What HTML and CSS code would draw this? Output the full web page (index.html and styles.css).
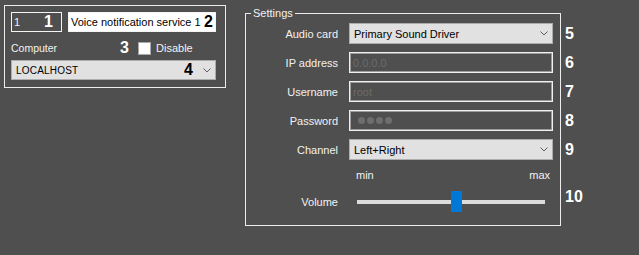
FILE: index.html
```html
<!DOCTYPE html>
<html lang="en">
<head>
  <meta charset="UTF-8" />
  <meta name="viewport" content="width=device-width, initial-scale=1.0" />
  <title>Voice notification service</title>
  <link rel="stylesheet" href="styles.css">
</head>
<body>
  <div class="screen">
    <div class="object-panel">
      <div class="name-row">
        <div class="field field-id"><span>1</span><b class="num">1</b></div>
        <div class="field field-name"><span>Voice notification service 1</span><b class="num dark">2</b></div>
      </div>
      <div class="computer-row">
        <span>Computer</span>
        <b class="num">3</b>
        <label class="check"><span class="box"></span>Disable</label>
      </div>
      <div class="combo combo-host">
        <span class="combo-text">LOCALHOST</span>
        <b class="num dark">4</b>
        <svg class="chevron" width="8" height="5" viewBox="0 0 8 5"><path d="M0.5 0.5 L4 4 L7.5 0.5" fill="none" stroke="#606060" stroke-width="1"/></svg>
      </div>
    </div>

    <fieldset class="settings">
      <legend>Settings</legend>
      <div class="grid">
        <div class="label">Audio card</div>
        <div class="control">
          <div class="combo">
            <span class="combo-text">Primary Sound Driver</span>
            <svg class="chevron" width="8" height="5" viewBox="0 0 8 5"><path d="M0.5 0.5 L4 4 L7.5 0.5" fill="none" stroke="#606060" stroke-width="1"/></svg>
          </div>
          <b class="num side">5</b>
        </div>

        <div class="label">IP address</div>
        <div class="control">
          <div class="input"><span class="hint">0.0.0.0</span></div>
          <b class="num side">6</b>
        </div>

        <div class="label">Username</div>
        <div class="control">
          <div class="input"><span class="hint">root</span></div>
          <b class="num side">7</b>
        </div>

        <div class="label">Password</div>
        <div class="control">
          <div class="input"><span class="dots"><i></i><i></i><i></i><i></i></span></div>
          <b class="num side">8</b>
        </div>

        <div class="label">Channel</div>
        <div class="control">
          <div class="combo">
            <span class="combo-text">Left+Right</span>
            <svg class="chevron" width="8" height="5" viewBox="0 0 8 5"><path d="M0.5 0.5 L4 4 L7.5 0.5" fill="none" stroke="#606060" stroke-width="1"/></svg>
          </div>
          <b class="num side">9</b>
        </div>

        <div></div>
        <div class="range-labels"><span>min</span><span>max</span></div>

        <div class="label volume-label">Volume</div>
        <div class="control volume">
          <div class="slider">
            <div class="track"></div>
            <div class="thumb" style="left: 50%"></div>
          </div>
          <b class="num side">10</b>
        </div>
      </div>
    </fieldset>
  </div>
</body>
</html>
```

FILE: styles.css
```css
body {
  margin: 0;
  background: #4f4f4f;
  font-family: "Liberation Sans", Arial, sans-serif;
  font-size: 11px;
  color: #f2f2f2;
}
.screen {
  display: flex;
  align-items: flex-start;
  padding: 5px 0 0 4px;
  height: 250px;
}
.object-panel {
  width: 222px;
  height: 83px;
  box-sizing: border-box;
  border: 1px solid #ececec;
  padding: 6px 9px 0 6px;
}
.name-row {
  display: flex;
  gap: 6px;
}
.field {
  height: 20px;
  box-sizing: border-box;
  border: 1px solid #f4f4f4;
  display: flex;
  align-items: center;
  justify-content: space-between;
  padding: 0 3px 0 2px;
  white-space: nowrap;
}
.field-id {
  width: 51px;
  padding-right: 8px;
}
.field-name {
  flex: 1;
  background: #fff;
  color: #000;
  padding-right: 2px;
}
.num {
  font-weight: bold;
  font-size: 16px;
  color: #fff;
  line-height: 1;
}
.num.dark {
  color: #000;
}
.computer-row {
  display: flex;
  align-items: center;
  height: 14px;
  margin-top: 9px;
  font-size: 10.5px;
}
.computer-row .num {
  margin-left: 63px;
  margin-right: 9px;
}
.check {
  display: flex;
  align-items: center;
  gap: 5px;
  font-size: 11px;
}
.box {
  width: 13px;
  height: 13px;
  box-sizing: border-box;
  background: #fff;
  border: 1px solid #a8a8a8;
}
.combo {
  height: 20px;
  box-sizing: border-box;
  background: #e1e1e1;
  border: 1px solid #adadad;
  color: #000;
  display: flex;
  align-items: center;
  padding: 0 4px 0 4px;
  font-size: 11px;
}
.combo-text {
  flex: 1;
}
.combo-host {
  margin-top: 5px;
  width: 205px;
}
.combo-host .combo-text {
  font-size: 10px;
  letter-spacing: 0.2px;
}
.combo-host .num {
  margin-right: 10px;
}
.chevron {
  display: block;
}

.settings {
  margin: 2px 0 0 19px;
  width: 316px;
  height: 219px;
  box-sizing: border-box;
  border: 1px solid #ececec;
  padding: 3px 6px 0 4px;
}
.settings legend {
  padding: 0 2px;
  margin-left: 1px;
  font-size: 11px;
  line-height: 13px;
}
.grid {
  display: grid;
  grid-template-columns: 88px 204px;
  column-gap: 11px;
  row-gap: 8px;
  align-items: center;
}
.label {
  text-align: right;
}
.control {
  position: relative;
}
.control .combo,
.input {
  height: 21px;
}
.input {
  box-sizing: border-box;
  border: 1px solid #f0f0f0;
  box-shadow: inset 0 0 0 1px #9c9c9c;
  display: flex;
  align-items: center;
  padding: 0 3px;
}
.hint {
  color: #6c6c6c;
}
.dots {
  display: flex;
  gap: 2px;
  padding-left: 5px;
}
.dots i {
  width: 7px;
  height: 7px;
  border-radius: 50%;
  background: #6e6e6e;
}
.side {
  position: absolute;
  left: 216px;
  top: 3px;
}
.range-labels {
  display: flex;
  justify-content: space-between;
  padding: 0 3px 0 7px;
  margin-top: 1px;
}
.volume,
.volume-label {
  margin-top: 2px;
}
.slider {
  position: relative;
  height: 21px;
  margin: 0 8px 0 8px;
}
.track {
  position: absolute;
  left: 0;
  right: 0;
  top: 9px;
  height: 4px;
  background: #dcdcdc;
}
.thumb {
  position: absolute;
  top: 0;
  width: 11px;
  height: 21px;
  background: #0078d7;
}
.volume .side {
  top: -2px;
}
```
